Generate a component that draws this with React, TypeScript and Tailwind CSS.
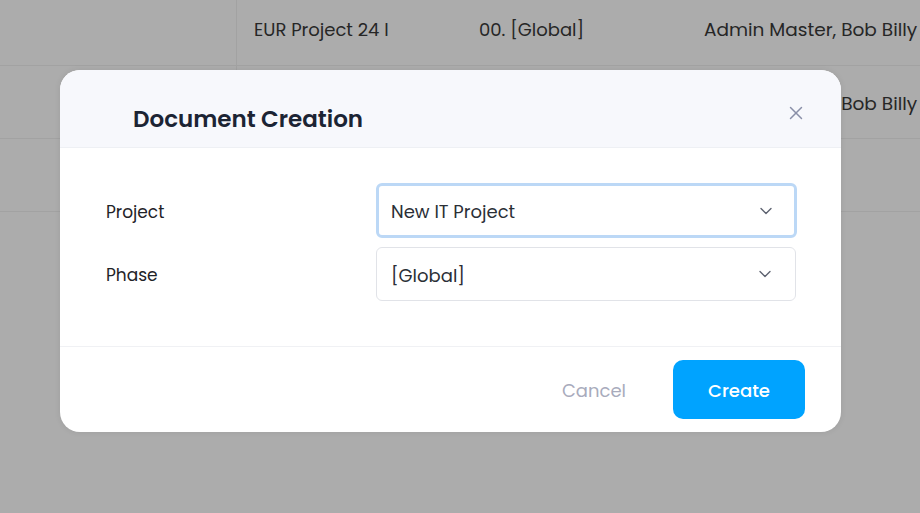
import React from 'react';
import { X, ChevronDown } from 'lucide-react';

const font = { fontFamily: 'Poppins, "Noto Sans", "Open Sans", sans-serif' };

const rows = [
	{ project: 'EUR Project 24 I', phase: '00. [Global]', users: 'Admin Master, Bob Billy' },
	{ project: '', phase: '', users: 'Admin Master, Bob Billy' },
	{ project: '', phase: '', users: '' },
];

const Select: React.FC<{ value: string; focused?: boolean }> = ({ value, focused }) => (
	<div
		className={
			focused
				? 'flex h-[55px] w-[421px] items-center justify-between rounded-[6px] border-[3px] border-[#bcd8f6] bg-white pl-[12px] pr-[18px]'
				: 'flex h-[54px] w-[420px] items-center justify-between rounded-[6px] border border-[#e1e3e8] bg-white pl-[14px] pr-[20px]'
		}>
		<span className="pt-[2px] text-[18px] text-[#2b2f36]">{value}</span>
		<ChevronDown className="h-5 w-5 text-[#5d6270]" strokeWidth={1.6} />
	</div>
);

export default function App() {
	return (
		<div className="relative h-[513px] w-[920px] overflow-hidden bg-[#acacac]" style={font}>
			{/* таблица за модалкой */}
			<div className="flex flex-col">
				{rows.map((row, i) => (
					<div key={i} className="flex h-[73px] border-b border-[#a2a2a2] first:h-[66px]">
						<div className="w-[237px] shrink-0 border-r border-[#a2a2a2]" />
						<div className={i === 0 ? 'flex items-center pb-[6px] text-[18px] text-[#262626]' : 'flex items-center pt-[3px] text-[18px] text-[#262626]'}>
							<span className="w-[242px] shrink-0 pl-[17px]">{row.project}</span>
							<span className="w-[225px] shrink-0">{row.phase}</span>
							<span className="whitespace-nowrap text-[18.5px]">{row.users}</span>
						</div>
					</div>
				))}
			</div>

			{/* модалка */}
			<div className="absolute left-[60px] top-[70px] w-[781px] overflow-hidden rounded-[20px] bg-white shadow-[0_0_6px_rgba(0,0,0,0.08)]">
				<div className="flex h-[78px] items-center justify-between border-b border-[#eef0f4] bg-[#f7f8fc] pl-[73px] pr-[34px]">
					<h2 className="pt-[22px] text-[23px] font-semibold text-[#1c2434]">Document Creation</h2>
					<X className="mt-[8px] h-[22px] w-[22px] text-[#8a8fa8]" strokeWidth={1.6} />
				</div>

				<div className="flex flex-col gap-[9px] border-b border-[#f0f1f4] pb-[45px] pl-[46px] pt-[35px]">
					<div className="flex items-center">
						<span className="w-[270px] pt-[4px] text-[17px] text-[#1f2328]">Project</span>
						<Select value="New IT Project" focused />
					</div>
					<div className="flex items-center">
						<span className="w-[270px] pt-[4px] text-[17px] text-[#1f2328]">Phase</span>
						<Select value="[Global]" />
					</div>
				</div>

				<div className="flex h-[85px] items-center justify-end gap-[47px] pr-[36px]">
					<button className="pt-[2px] text-[18px] text-[#a8abbc]">Cancel</button>
					<button className="h-[59px] w-[132px] rounded-[10px] bg-[#00a3ff] pt-[2px] text-[18px] font-medium text-white">
						Create
					</button>
				</div>
			</div>
		</div>
	);
}
